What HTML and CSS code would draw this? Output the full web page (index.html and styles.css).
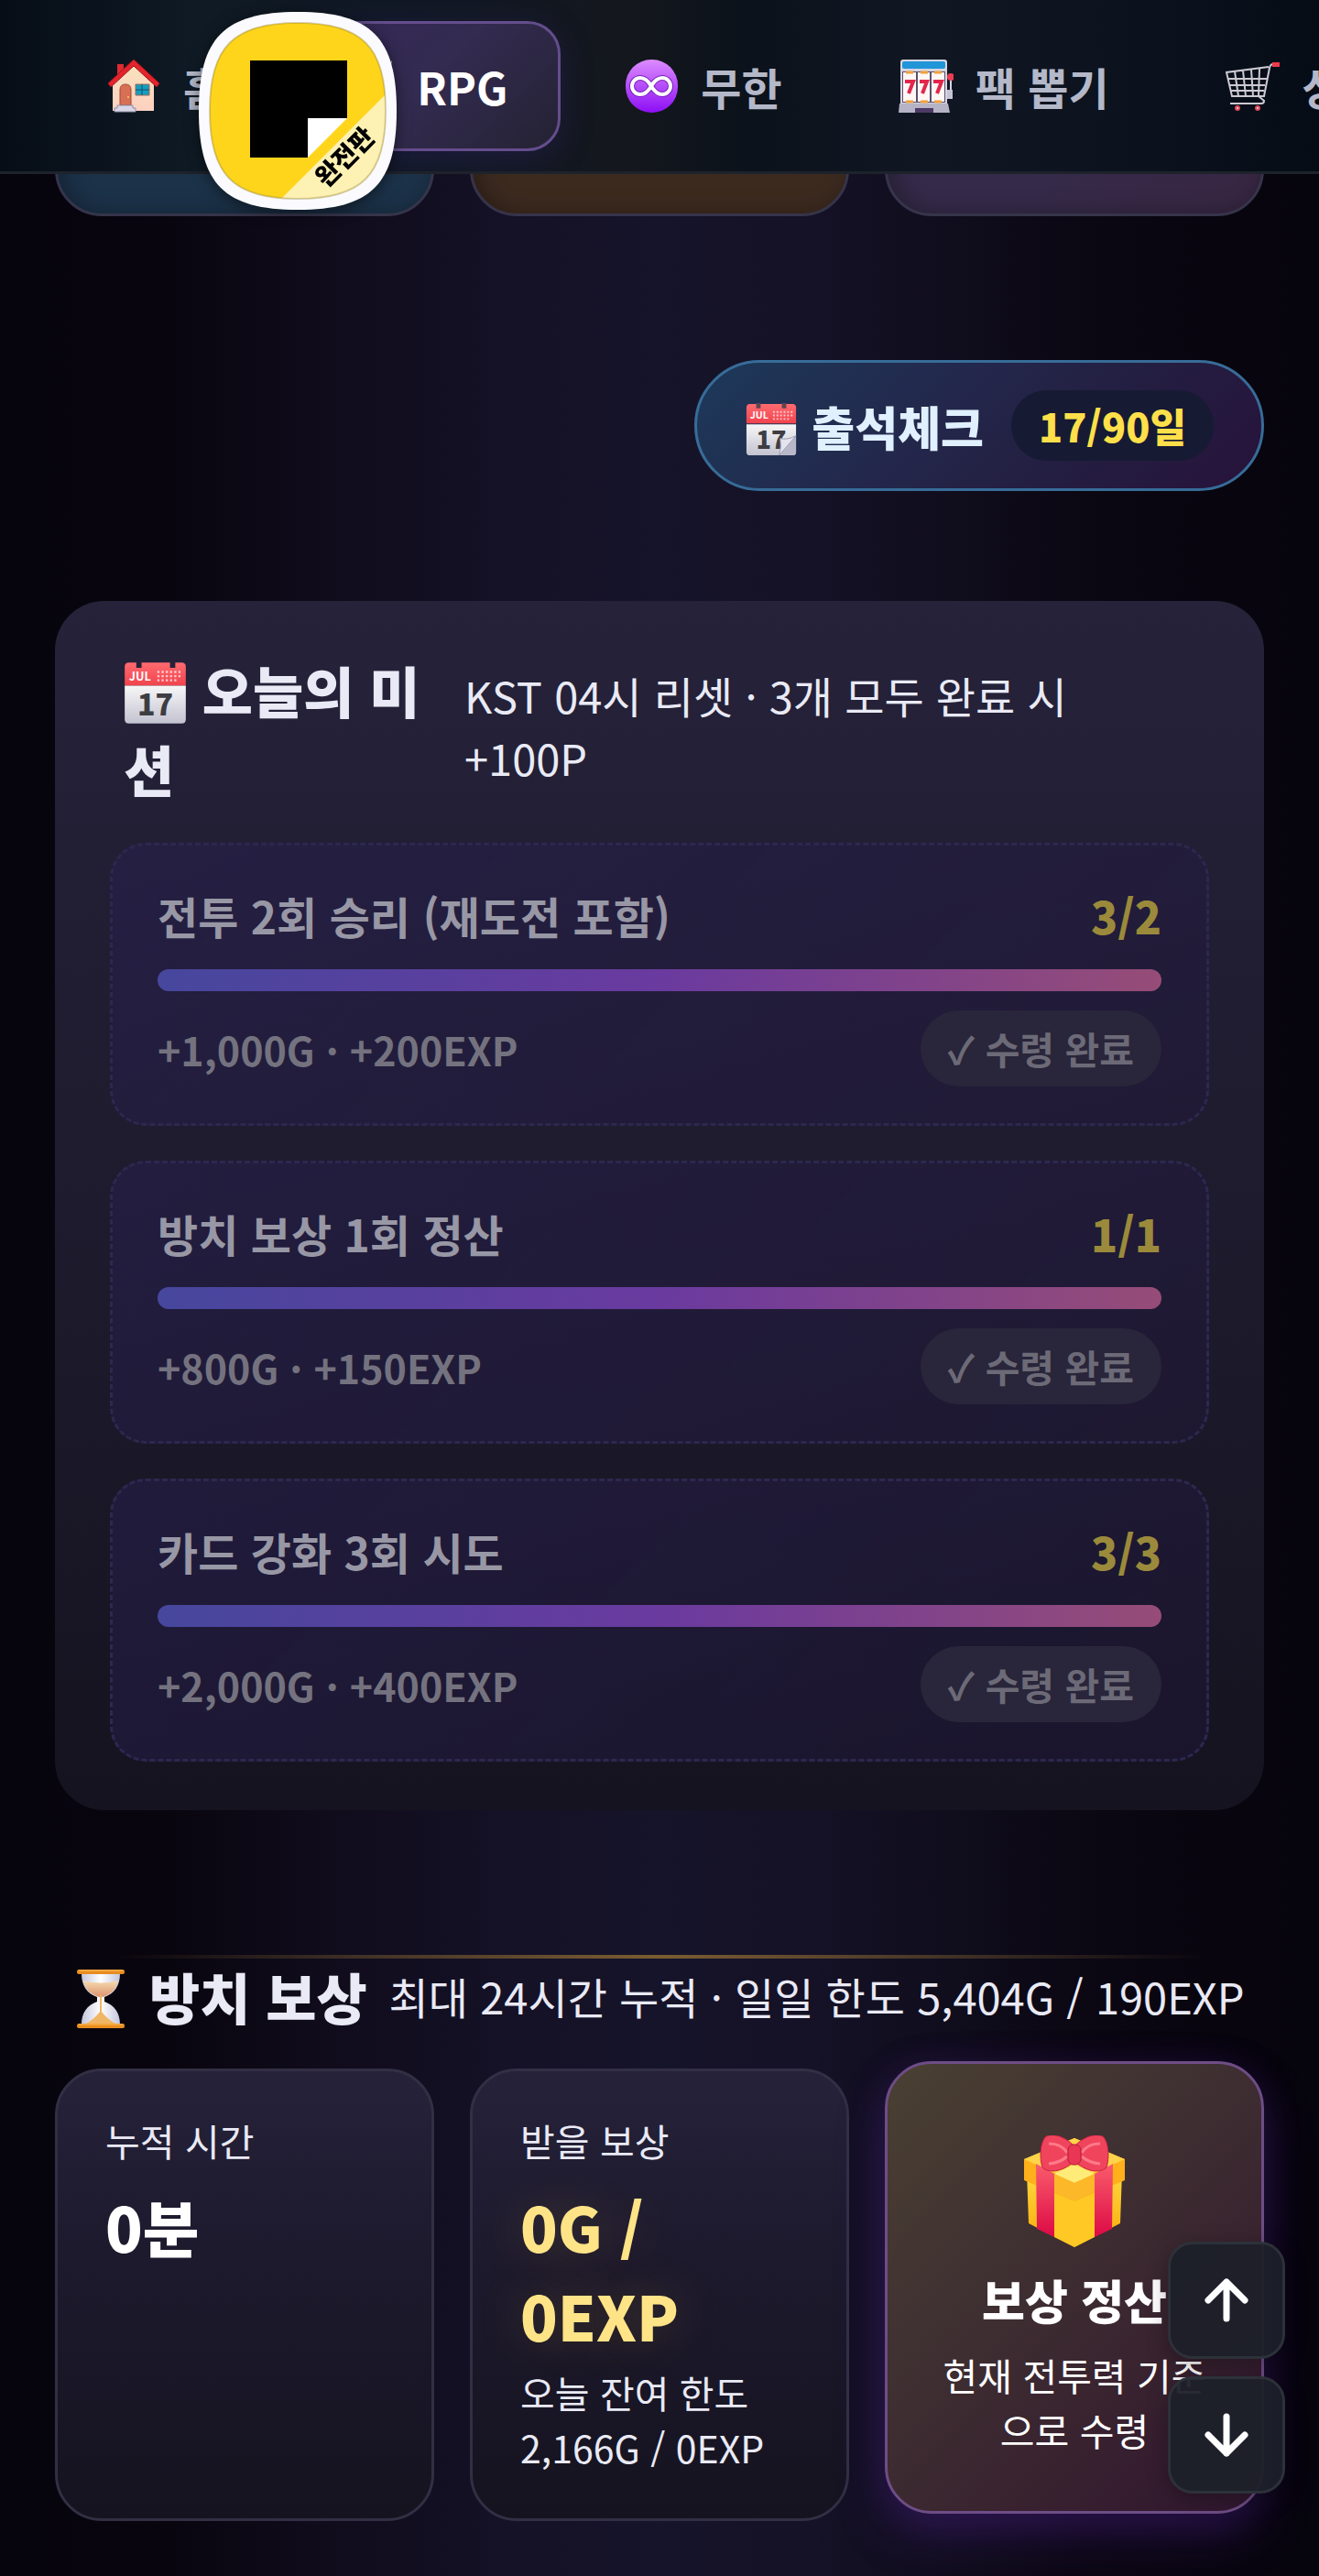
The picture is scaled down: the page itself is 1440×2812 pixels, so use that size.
FILE: index.html
```html
<!DOCTYPE html>
<html lang="ko">
<head>
	<title>RPG</title>
	<meta charset="utf-8" />
	<meta name="viewport" content="width=device-width, initial-scale=1" />
	<link rel="stylesheet" href="styles.css">
</head>
<body>

<!-- shared gradients -->
<svg class="defs" aria-hidden="true">
	<defs>
		<linearGradient id="red" x1="0" y1="0" x2="0" y2="1">
			<stop offset="0" stop-color="#ff6b70" />
			<stop offset="1" stop-color="#f0434e" />
		</linearGradient>
		<linearGradient id="paper" x1="0" y1="0" x2="0" y2="1">
			<stop offset="0" stop-color="#f7f7f8" />
			<stop offset="1" stop-color="#c3c2d0" />
		</linearGradient>
		<linearGradient id="violet" x1="0" y1="0" x2="0" y2="1">
			<stop offset="0" stop-color="#dd8cff" />
			<stop offset="1" stop-color="#8d0ff5" />
		</linearGradient>
		<linearGradient id="gold" x1="0" y1="0" x2="0" y2="1">
			<stop offset="0" stop-color="#ffd83e" />
			<stop offset="1" stop-color="#f8a908" />
		</linearGradient>
		<linearGradient id="ribbon" x1="0" y1="0" x2="0" y2="1">
			<stop offset="0" stop-color="#fa5c6c" />
			<stop offset="1" stop-color="#dc0a45" />
		</linearGradient>
		<linearGradient id="wall" x1="0" y1="0" x2="0" y2="1">
			<stop offset="0" stop-color="#f8e3bd" />
			<stop offset="1" stop-color="#fdd0c0" />
		</linearGradient>
		<linearGradient id="glass" x1="0" y1="0" x2="1" y2="0">
			<stop offset="0" stop-color="#c4c6dc" />
			<stop offset=".5" stop-color="#ffffff" />
			<stop offset="1" stop-color="#c4c6dc" />
		</linearGradient>
		<linearGradient id="sand" x1="0" y1="0" x2="0" y2="1">
			<stop offset="0" stop-color="#f6dcb0" />
			<stop offset="1" stop-color="#dc9270" />
		</linearGradient>
	</defs>
</svg>

<header class="topbar">
	<nav class="tabs">
		<a class="tab" href="#home">
			<svg class="tab-icon" viewBox="0 0 60 60" aria-hidden="true">
				<path d="M12 6h7v18h-7z" fill="#dd2b31" />
				<path d="M7 28L30 5l22 23v29H7z" fill="url(#wall)" />
				<path d="M30 1L2 27l3 4L30 8l25 23 3-4z" fill="#e3242b" stroke="#9e1520" stroke-width="1" />
				<path d="M15 51V34q0-6 6-6t6 6v17z" fill="#d76f54" stroke="#a34a36" stroke-width="1" />
				<circle cx="24" cy="42" r="1" fill="#ffd24d" />
				<path d="M32 28h15v12H32z" fill="#149dbd" stroke="#a06a58" stroke-width="1" />
				<path d="M39 28v12M32 34h15" stroke="#17506f" stroke-width="1" />
				<path d="M12 51h17v3h3v4H9v-4h3z" fill="#d8d6e6" stroke="#8f8da8" stroke-width="1" />
			</svg>
			<span>홈</span>
		</a>
		<a class="tab active" href="#rpg">
			<svg class="tab-icon" viewBox="0 0 60 60" aria-hidden="true">
				<path d="M3 2l40 42-4 4L5 12zM57 2L17 44l4 4 34-36z" fill="#c9cbd8" />
				<path d="M8 42l10 10M52 42L42 52" stroke="#8b6a4b" stroke-width="5" />
			</svg>
			<span>RPG</span>
		</a>
		<a class="tab" href="#infinite">
			<svg class="tab-icon" viewBox="0 0 60 60" aria-hidden="true">
				<rect x="2" y="1" width="57" height="58" rx="28" fill="url(#violet)" />
				<path d="M30 30c-4-7-8-9-12-9a9 9 0 0 0 0 18c4 0 8-2 12-9s8-9 12-9a9 9 0 0 1 0 18c-4 0-8-2-12-9z" fill="none" stroke="#7b21bd" stroke-width="6" />
				<path d="M30 30c-4-7-8-9-12-9a9 9 0 0 0 0 18c4 0 8-2 12-9s8-9 12-9a9 9 0 0 1 0 18c-4 0-8-2-12-9z" fill="none" stroke="#fff" stroke-width="4" />
			</svg>
			<span>무한</span>
		</a>
		<a class="tab" href="#packs">
			<svg class="tab-icon" viewBox="0 0 60 60" aria-hidden="true">
				<path d="M2 4q0-3 3-3h45q3 0 3 3v45H2z" fill="#d7d5e3" />
				<rect x="4" y="3" width="47" height="8" rx="2" fill="#2095d8" />
				<path d="M4 14h47v34H4z" fill="#5c506a" />
				<path d="M5 15h14v32H5zM21 15h13v32H21zM36 15h14v32H36z" fill="#fff7f5" />
				<path d="M8 15h8M24 15h8M39 15h8M8 47h8M24 47h8M39 47h8" stroke="#efa13e" stroke-width="3" />
				<path d="M7 25h9l-5 13M23 25h8l-5 13M38 25h9l-5 13" fill="none" stroke="#e2264c" stroke-width="4" />
				<path d="M1 49h53l2 10H0z" fill="#b6b3c6" />
				<path d="M18 54h20v5H18z" fill="#4e3a66" />
				<path d="M57 22v20" stroke="#d7d5e3" stroke-width="2" />
				<path d="M53 34h6v10h-6z" fill="#c5c3d4" />
				<circle cx="57" cy="20" r="4" fill="#ed3b54" />
			</svg>
			<span>팩 뽑기</span>
		</a>
		<a class="tab" href="#shop">
			<svg class="tab-icon" viewBox="0 0 60 60" aria-hidden="true">
				<path d="M58 6h-6q-3 0-4 4l-6 31H7L1 15l46-6M2 22h43M4 29h39M6 35h36M10 14l4 27M19 13l3 28M28 12l2 29M37 11l-1 30M36 41l6 5q0 3-3 3H5" fill="none" stroke="#cccad2" stroke-width="2" />
				<path d="M51 4h8v5h-8z" fill="#ef3a4d" />
				<circle cx="13" cy="54" r="2" fill="#ddd" stroke="#e0485c" stroke-width="2" />
				<circle cx="35" cy="54" r="2" fill="#ddd" stroke="#e0485c" stroke-width="2" />
			</svg>
			<span>상점</span>
		</a>
	</nav>
</header>

<!-- floating app badge over the tab bar -->
<svg class="app-badge" viewBox="0 0 216 216" role="img" aria-label="완전판">
	<clipPath id="squircle">
		<path d="M108 12C178 12 204 38 204 108S178 204 108 204 12 178 12 108 38 12 108 12z" />
	</clipPath>
	<path d="M108 0C188 0 216 28 216 108S188 216 108 216 0 188 0 108 28 0 108 0z" fill="#fbfbff" />
	<g clip-path="url(#squircle)">
		<path d="M0 0h216v216H0z" fill="#ffd51c" />
		<path d="M216 78v138H78z" fill="#fdf1b4" />
		<path d="M56 53h106v63h-43v43H56z" fill="#000" />
		<path d="M119 116h43l-43 43z" fill="#fff" />
		<text class="badge-text" transform="translate(163 162) rotate(-45)" text-anchor="middle" y="5">완전판</text>
	</g>
	<path d="M108 12C178 12 204 38 204 108S178 204 108 204 12 178 12 108 38 12 108 12z" fill="none" stroke="#8a7a3a" stroke-opacity=".35" stroke-width="2" />
</svg>

<main class="page">
	<div class="cards">
		<div class="peek-card blue"></div>
		<div class="peek-card brown"></div>
		<div class="peek-card purple"></div>
	</div>

	<button type="button" class="attend">
		<svg class="attend-icon" viewBox="0 0 60 60" aria-hidden="true">
			<path d="M2 5q0-4 4-4h48q4 0 4 4v18H2z" fill="url(#red)" />
			<path d="M2 24h56v31q0 4-4 4H6q-4 0-4-4z" fill="url(#paper)" />
			<path d="M13 0h5v6h-5zM42 0h5v6h-5z" fill="#5e4450" />
			<text x="6" y="18" class="cal-month">JUL</text>
			<path d="M32 10h24M32 14h24M32 18h20" stroke="#ffc9cc" stroke-width="2" stroke-dasharray="2 2" />
			<text x="30" y="52" text-anchor="middle" class="cal-day">17</text>
			<path d="M58 37L39 59h15q4 0 4-4z" fill="#b9b8c9" />
			<path d="M58 37L39 59q3-9 1-19 8 2 18-3z" fill="#e4e3ee" stroke="#9d9cae" stroke-width="1" />
		</svg>
		<span>출석체크</span>
		<span class="attend-count">17/90일</span>
	</button>

	<section class="missions">
		<div class="missions-head">
			<h2><svg class="head-icon" viewBox="0 0 60 60" aria-hidden="true">
				<path d="M1 5q0-4 4-4h7v5h5V1h27v5h5V1h6q4 0 4 4v18H1z" fill="url(#red)" />
				<path d="M1 23h58v32q0 4-4 4H5q-4 0-4-4z" fill="url(#paper)" />
				<text x="5" y="18" class="cal-month">JUL</text>
				<path d="M32 10h24M32 14h24M32 18h20" stroke="#ffc9cc" stroke-width="2" stroke-dasharray="2 2" />
				<text x="30" y="51" text-anchor="middle" class="cal-day">17</text>
			</svg> 오늘의 미션</h2>
			<p>KST 04시 리셋 · 3개 모두 완료 시 +100P</p>
		</div>
		<article class="mission">
			<div class="row"><h3>전투 2회 승리 (재도전 포함)</h3><b class="count">3/2</b></div>
			<div class="bar"></div>
			<div class="row"><span class="reward">+1,000G · +200EXP</span><button type="button" class="claimed" disabled>✓ 수령 완료</button></div>
		</article>
		<article class="mission">
			<div class="row"><h3>방치 보상 1회 정산</h3><b class="count">1/1</b></div>
			<div class="bar"></div>
			<div class="row"><span class="reward">+800G · +150EXP</span><button type="button" class="claimed" disabled>✓ 수령 완료</button></div>
		</article>
		<article class="mission">
			<div class="row"><h3>카드 강화 3회 시도</h3><b class="count">3/3</b></div>
			<div class="bar"></div>
			<div class="row"><span class="reward">+2,000G · +400EXP</span><button type="button" class="claimed" disabled>✓ 수령 완료</button></div>
		</article>
	</section>

	<section class="idle">
		<div class="idle-head">
			<svg class="hourglass" viewBox="0 0 52 64" aria-hidden="true">
				<path d="M5 4h42c0 14-6 22-17 26v5c11 4 17 12 17 25H5c0-13 6-21 17-25v-5C11 26 5 18 5 4z" fill="url(#glass)" />
				<path d="M7 12q19 5 38 0c-2 10-8 15-17 18h-4C15 27 9 22 7 12z" fill="url(#sand)" />
				<path d="M25 28h2v18q6 8 15 13H10q9-5 15-13z" fill="#f1b665" />
				<rect width="52" height="5" rx="2" fill="#e98c20" />
				<rect y="59" width="52" height="5" rx="2" fill="#e98c20" />
				<path d="M2 1h48M2 60h48" stroke="#ffc15b" />
			</svg>
			<h2>방치 보상</h2>
			<p>최대 24시간 누적 · 일일 한도 5,404G / 190EXP</p>
		</div>
		<div class="cards">
			<div class="stat">
				<span class="label">누적 시간</span>
				<strong>0분</strong>
			</div>
			<div class="stat">
				<span class="label">받을 보상</span>
				<strong class="gold">0G / 0EXP</strong>
				<span>오늘 잔여 한도 2,166G / 0EXP</span>
			</div>
			<button type="button" class="collect">
				<svg class="gift" viewBox="0 0 112 122" aria-hidden="true">
					<path d="M4 40l52 22 52-22-2 56-50 26L6 96z" fill="url(#gold)" />
					<path d="M56 62l22-10v59l-22 11-22-11V52z" fill="#ffc824" />
					<path d="M1 26L56 3l55 23v23L56 72 1 49z" fill="#ffb01a" />
					<path d="M1 26L56 3l55 23-55 25z" fill="#ffd34a" />
					<path d="M34 42l22-10 22 10-22 10z" fill="#ffec78" />
					<path d="M34 42l22 10 22-10v20L56 72 34 62z" fill="#fcb828" />
					<path d="M14 31l20 11v69l-19-9zM98 31L78 42v69l19-9z" fill="url(#ribbon)" />
					<path d="M56 12C45 0 30-3 24 2c-6 8-6 23-3 33 8 8 25 3 35-7 10 10 27 15 35 7 3-10 3-25-3-33-6-5-21-2-32 10z" fill="#f0445d" stroke="#c21f42" stroke-width="1" />
					<path d="M28 9q14 0 20 10M84 9q-14 0-20 10M28 31q12-1 20-8M84 31q-12-1-20-8" fill="none" stroke="#ff7a88" stroke-width="3" />
					<rect x="49" y="10" width="14" height="22" rx="6" fill="#e83654" stroke="#b81b3b" stroke-width="1" />
				</svg>
				<b>보상 정산</b>
				<span>현재 전투력 기준으로 수령</span>
			</button>
		</div>
	</section>
</main>

<div class="jump">
	<button type="button" aria-label="맨 위로">
		<svg viewBox="0 0 48 48" aria-hidden="true"><path d="M24 44V4M4 24L24 4l20 20" /></svg>
	</button>
	<button type="button" aria-label="맨 아래로">
		<svg viewBox="0 0 48 48" aria-hidden="true"><path d="M24 4v40M4 24l20 20 20-20" /></svg>
	</button>
</div>

</body>
</html>
```

FILE: styles.css
```css
*{
	box-sizing: border-box;
}
body{
	margin: 0;
	font-family: "Noto Sans CJK KR", sans-serif;
	color: #e9eaf5;
	background: linear-gradient(90deg, #06040c 0%, #08050e 12%, #100c1c 25%, #151126 38%, #16142a 50%, #151126 62%, #100d1d 72%, #0b0713 82%, #06040c 100%);
	overflow-x: hidden;
}
h2, h3, p{
	margin: 0;
}
button{
	font-family: inherit;
	color: inherit;
	margin: 0;
}
.defs{
	position: absolute;
	width: 0;
	height: 0;
}
.cal-month{
	font-size: 11px;
	font-weight: 700;
	fill: #fff;
}
.cal-day{
	font-size: 28px;
	font-weight: 900;
	fill: #3d3d42;
}

/* top tabs */
.topbar{
	position: fixed;
	top: 0;
	left: 0;
	right: 0;
	z-index: 5;
	height: 190px;
	padding: 23px 0 0 58px;
	border-bottom: 3px solid #1d222b;
	background: linear-gradient(90deg, #060d17 0%, #0f1a24 15%, #111824 32%, #14171d 48%, #0b121b 57%, #101723 70%, #0b121e 88%, #050c15 100%);
	overflow: hidden;
}
.tabs{
	display: flex;
	gap: 11px;
}
.tab{
	flex: none;
	display: flex;
	align-items: center;
	gap: 24px;
	height: 142px;
	padding: 0 55px;
	border: 3px solid transparent;
	border-radius: 36px;
	color: #b4b8c8;
	font-size: 48px;
	font-weight: 700;
	text-decoration: none;
}
.tab.active{
	color: #fff;
	border-color: #644d8c;
	background: linear-gradient(135deg, #35285a, #332b50 50%, #242233);
	box-shadow: 0 8px 36px rgba(60,40,130,.3);
}
.tab-icon{
	width: 60px;
	height: 60px;
}
.app-badge{
	position: fixed;
	top: 13px;
	left: 217px;
	z-index: 6;
	width: 216px;
	height: 216px;
	filter: drop-shadow(0 3px 8px rgba(0,0,0,.5));
}
.badge-text{
	font-size: 28px;
	font-weight: 900;
	fill: #000;
}

.page{
	padding: 0 60px 61px;
}
.cards{
	display: grid;
	grid-template-columns: repeat(3, 1fr);
	gap: 39px;
}
.peek-card{
	height: 236px;
	border: 3px solid #36344a;
	border-radius: 51px;
	box-shadow: inset 6px 0 24px rgba(0,0,0,.3);
}
.blue{
	background: #1c3249;
}
.brown{
	background: #3c2a1f;
}
.purple{
	background: linear-gradient(120deg, #352a49 50%, #382642);
}

/* attendance */
.attend{
	display: flex;
	align-items: center;
	gap: 15px;
	height: 143px;
	margin: 157px 0 0 auto;
	padding: 0 52px;
	border: 3px solid #376c98;
	border-radius: 72px;
	background: linear-gradient(135deg, #1d395a, #23264a 45%, #231f42 65%, #27123a);
	color: #e0f0ff;
	font-size: 51px;
	font-weight: 800;
}
.attend-icon{
	width: 58px;
	height: 58px;
	margin-top: 9px;
}
.attend-count{
	margin-left: 15px;
	padding: 0 30px;
	border-radius: 39px;
	background: #171a33;
	color: #ffe04a;
	font-size: 43px;
	line-height: 77px;
}

/* daily missions */
.missions{
	display: flex;
	flex-direction: column;
	gap: 38px;
	margin-top: 120px;
	padding: 54px 60px 53px;
	border-radius: 54px;
	background: linear-gradient(180deg, #25223a 0%, #1e1b2e 50%, #15131f 100%);
}
.missions-head{
	display: flex;
	align-items: baseline;
	gap: 42px;
	padding: 0 15px;
}
.missions-head h2{
	flex: 0 0 330px;
	font-size: 60px;
	font-weight: 800;
	line-height: 86px;
	word-break: break-all;
}
.head-icon{
	width: 69px;
	height: 69px;
	vertical-align: -12px;
}
.missions-head p{
	width: 690px;
	font-size: 47px;
	line-height: 68px;
}
.mission{
	padding: 40px 49px;
	border: 3px dashed #2c284e;
	border-radius: 39px;
	background: linear-gradient(135deg, rgba(40,32,80,.5), rgba(34,24,62,.4));
}
.row{
	display: flex;
	align-items: center;
	justify-content: space-between;
}
.mission h3, .count{
	color: #9897a5;
	font-size: 48px;
	font-weight: 700;
	line-height: 72px;
}
.mission .count{
	color: #9b8a3b;
	font-weight: 800;
}
.bar{
	height: 24px;
	margin: 23px 0 21px;
	border-radius: 12px;
	background: linear-gradient(90deg, #46479d, #6a3a9f 50%, #964c77);
}
.reward{
	color: #74727f;
	font-size: 43px;
	font-weight: 700;
}
.claimed{
	padding: 0 30px;
	border: 0;
	border-radius: 42px;
	background: #29253a;
	color: #6c6a77;
	font-size: 41px;
	font-weight: 700;
	line-height: 83px;
}

/* idle rewards */
.idle{
	margin-top: 158px;
}
.idle-head{
	display: flex;
	align-items: center;
	height: 124px;
	padding: 0 0 40px 24px;
	border-top: 4px solid;
	border-image: linear-gradient(90deg, transparent 5%, #7a5c30 50%, transparent 95%) 4;
}
.hourglass{
	width: 52px;
	height: 64px;
	margin-top: 8px;
}
.idle-head h2{
	margin: 0 24px 0 27px;
	font-size: 60px;
	font-weight: 900;
}
.idle-head p{
	font-size: 47px;
	white-space: nowrap;
}
.stat, .collect{
	display: flex;
	flex-direction: column;
	min-width: 0;
	padding: 42px 52px 48px;
	border: 3px solid #322f44;
	border-radius: 51px;
	background: linear-gradient(180deg, #25223a 0%, #1d1a2e 40%, #15131f 100%);
	font-size: 41px;
	line-height: 60px;
}
.label{
	line-height: 66px;
}
.stat strong{
	margin: 12px 0 6px;
	color: #fff;
	font-size: 67px;
	font-weight: 800;
	line-height: 97px;
}
.stat .gold{
	width: 230px;
	color: #ffe487;
	text-shadow: 0 0 54px rgba(255,190,60,.2);
}
/* lifted as the call to action */
.collect{
	align-items: center;
	padding-top: 78px;
	border-color: #6e4d86;
	background: linear-gradient(135deg, #4a4032 0%, #403232 35%, #38222f 70%, #301630 100%);
	box-shadow: 0 24px 54px rgba(90,40,160,.3), 0 6px 40px rgba(90,40,160,.18);
	color: #fff;
	transform: translateY(-8px);
}
.gift{
	width: 112px;
	height: 122px;
}
.collect b{
	margin: 21px 0 16px;
	font-size: 51px;
	font-weight: 900;
	line-height: 72px;
}
.collect span{
	width: 300px;
	word-break: break-all;
}

.jump{
	position: fixed;
	right: 37px;
	bottom: 90px;
	display: grid;
	gap: 19px;
}
.jump button{
	display: grid;
	place-items: center;
	width: 128px;
	height: 128px;
	border: 3px solid #2d3139;
	border-radius: 27px;
	background: rgba(28,32,41,.95);
	box-shadow: 0 6px 24px rgba(0,0,0,.3);
}
.jump svg{
	width: 48px;
	height: 48px;
	fill: none;
	stroke: #fff;
	stroke-width: 7;
	stroke-linecap: round;
	stroke-linejoin: round;
}
```
